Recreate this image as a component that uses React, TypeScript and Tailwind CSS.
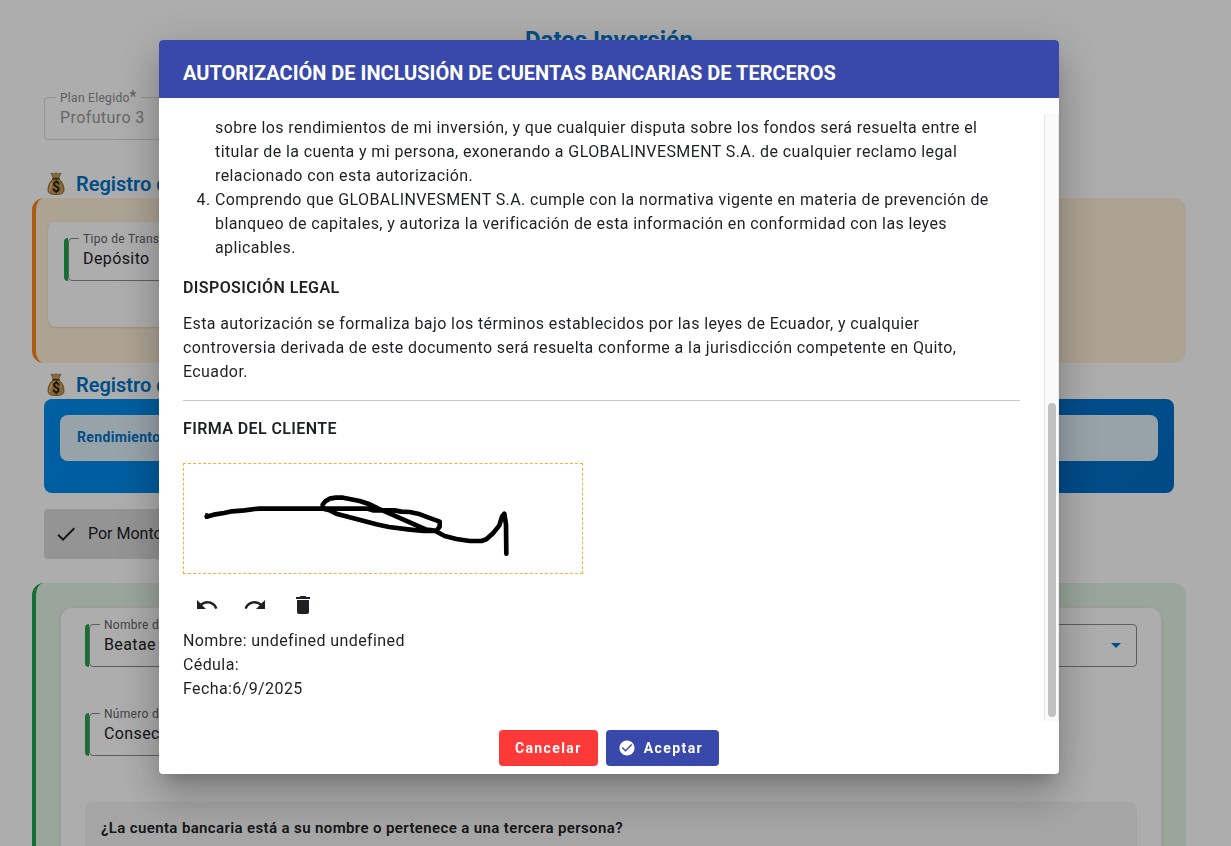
import { useId, type ReactNode } from "react";

function MoneyBag() {
  return (
    <svg viewBox="0 0 20 24" className="h-6 w-5 shrink-0" aria-hidden="true">
      <path d="M5 1 8 1.900 10 .8l2 1.100 3-.9-2.500 5.600H7.500z" fill="#c99f55" stroke="#6f4f20" strokeWidth=".6" />
      <path d="M7.500 6.600C4.500 9 2 13 2 17.600c0 3.600 2 4.800 8 4.800s8-1.200 8-4.800c0-4.600-2.500-8.600-5.500-11z" fill="#c69a50" stroke="#7f5a26" strokeWidth=".9" />
      <path d="M7 6.600h6" stroke="#5d3e19" strokeWidth="1.600" strokeLinecap="round" />
      <path d="M3.700 18.500c0-3 1-5.600 2.500-7.500" stroke="#efd08d" strokeWidth="1.200" fill="none" strokeLinecap="round" />
      <text x="10" y="19.500" textAnchor="middle" fontSize="14" fontWeight="700" fontFamily="Roboto, sans-serif" fill="#221a12">
        $
      </text>
    </svg>
  );
}

function SectionTitle({ children }: { children: ReactNode }) {
  return (
    <h2 className="flex items-center gap-2.5 pl-3.5 text-xl leading-7 font-semibold text-[#0073c8]">
      <MoneyBag />
      {children}
    </h2>
  );
}

function Field({ label, value }: { label: string; value: string }) {
  const id = useId();
  return (
    <div className="relative rounded-[4px] border-l-4 border-[#1fa34a]">
      <label htmlFor={id} className="absolute -top-[7px] left-[11px] bg-white px-1 text-xs leading-4 tracking-wide text-[#5f6368]">
        {label}
      </label>
      <input
        id={id}
        defaultValue={value}
        className="block h-[43px] w-full rounded-[4px] border border-[#8a8a8a] px-3.5 pb-0.5 text-base tracking-wide text-[#202124]"
      />
    </div>
  );
}

function InvestmentPage() {
  return (
    <main className="pt-6 pr-[45px] pl-8">
      <h1 className="text-center text-2xl leading-8 font-bold text-[#0073c8]">Datos Inversión</h1>

      <div className="relative mx-3 mt-[41px] w-1/2">
        <label htmlFor="plan" className="absolute -top-[7px] left-3 bg-white px-1 text-xs leading-4 tracking-wide text-[#8b8b8b]">
          Plan Elegido<span className="text-base leading-3">*</span>
        </label>
        <input
          id="plan"
          disabled
          defaultValue="Profuturo 3"
          className="block h-[43px] w-full rounded-[4px] border border-[#dadada] bg-white px-[15px] pb-0.5 text-base tracking-wide text-[#9a9a9a]"
        />
      </div>

      <div className="mt-[30px]">
        <SectionTitle>Registro de Pago</SectionTitle>
      </div>
      <section className="rounded-xl border-l-4 border-[#ff851b] bg-[#fef0d9] px-3 pt-6 pb-9">
        <div className="h-[105px] w-1/2 rounded-lg bg-white px-4 pt-4 shadow-sm">
          <Field label="Tipo de Transacción" value="Depósito" />
        </div>
      </section>

      <div className="mt-2">
        <SectionTitle>Registro de Plan</SectionTitle>
      </div>
      <section className="mx-3 rounded-lg bg-linear-135 from-[#008eef] to-[#006dc7] px-4 pt-4 pb-8">
        <div className="rounded-lg border border-white/30 bg-[#e0f0fa] px-4 pt-[11px] pb-[13px] text-sm leading-5 font-bold tracking-wide text-[#0073c8]">
          Rendimiento
        </div>
      </section>

      <button
        type="button"
        className="mx-3 mt-4 flex h-[50px] w-1/2 items-center gap-2.5 rounded-[4px] bg-[#dbdbdb] px-2.5 text-base text-[#202124]"
      >
        <svg viewBox="0 0 24 24" className="size-6 fill-current" aria-hidden="true">
          <path d="M9 16.200 4.800 12l-1.400 1.400L9 19 21 7l-1.400-1.400z" />
        </svg>
        Por Monto
      </button>

      <section className="mt-6 rounded-xl border-l-4 border-[#1fa34a] bg-[#e4f4e5] py-6 pr-6 pl-6">
        <div className="rounded-xl border border-[#e9e9e9] bg-white px-6 pt-4 pb-6 shadow-sm">
          <div className="grid grid-cols-2 gap-x-6 gap-y-[46px]">
            <Field label="Nombre del titular" value="Beatae" />
            <div className="relative">
              <select
                aria-label="Banco"
                className="h-[43px] w-full appearance-none rounded-[4px] border border-[#8a8a8a] bg-white px-4"
              />
              <svg viewBox="0 0 10 5" className="absolute top-[19px] right-4 h-[5px] w-2.5 fill-[#0073c8]" aria-hidden="true">
                <path d="M0 0h10L5 5z" />
              </svg>
            </div>
            <Field label="Número de cuenta" value="Consectetur" />
          </div>
          <div className="mt-[46px] h-24 rounded-lg bg-[#f3f3f3] px-4 py-3.5 text-[15px] leading-6 font-semibold tracking-wide text-[#202124]">
            ¿La cuenta bancaria está a su nombre o pertenece a una tercera persona?
          </div>
        </div>
      </section>
    </main>
  );
}

function Signature() {
  return (
    <div className="mt-[22px] h-[111px] w-[400px] max-w-full border border-dashed border-[#fbb034]">
      <svg viewBox="3 3 1194 327" className="block h-full w-full" role="img" aria-label="Firma">
        <g fill="none" stroke="#000" strokeWidth="14" strokeLinejoin="round" strokeLinecap="round">
          <path d="M71 161 97 154 123 150 147 145 184 142 215 138 230 137H555L570 142H634L655 146 680 147 705 152 735 163 770 176V191L761 203 722 204 675 199 618 192 580 184 540 173 500 163 460 152 440 142 421 137 419 125 427 115 440 107 458 104H480L500 108 530 114 560 124 586 137 626 154 680 178 730 200 755 203 785 219 820 228 860 234H895L910 229 930 211 949 187 957 161 964 152 969 185 970 272" />
        </g>
        <path d="M71 151v17M723 198v12" stroke="#000" strokeWidth="9" />
      </svg>
    </div>
  );
}

const tools = [
  {
    label: "Deshacer",
    path: "M12.5 8c-2.650 0-5.050.99-6.900 2.600L2 7v9h9l-3.620-3.620c1.390-1.160 3.160-1.880 5.120-1.880 3.540 0 6.550 2.310 7.600 5.500l2.370-.78C21.080 11.030 17.150 8 12.500 8z",
  },
  {
    label: "Rehacer",
    path: "M18.400 10.600C16.550 8.990 14.150 8 11.500 8c-4.650 0-8.580 3.030-9.960 7.220L3.900 16c1.050-3.190 4.050-5.500 7.600-5.500 1.950 0 3.730.72 5.120 1.880L13 16h9V7l-3.600 3.600z",
  },
  {
    label: "Borrar",
    path: "M6 19c0 1.100.9 2 2 2h8c1.100 0 2-.9 2-2V7H6v12zM19 4h-3.500l-1-1h-5l-1 1H5v2h14V4z",
  },
];

function AuthorizationDialog() {
  return (
    <div className="fixed inset-0 flex items-start justify-center bg-black/32 pt-10 pr-[13px]">
      <div
        role="dialog"
        aria-modal="true"
        aria-labelledby="dialog-title"
        className="w-full max-w-[900px] overflow-hidden rounded-[4px] bg-white text-[#1d2125] shadow-[0_11px_15px_-7px_rgba(0,0,0,0.2),0_24px_38px_3px_rgba(0,0,0,0.14),0_9px_46px_8px_rgba(0,0,0,0.12)]"
      >
        <h2 id="dialog-title" className="bg-[#3949ab] px-6 pt-[17px] pb-[9px] text-xl leading-8 font-bold text-white">
          AUTORIZACIÓN DE INCLUSIÓN DE CUENTAS BANCARIAS DE TERCEROS
        </h2>

        <div className="mt-4 flex">
          <div className="flex-1 pt-0.5 pr-6 pb-5 pl-6 text-base leading-6 tracking-wide">
            <ol start={3} className="list-decimal pl-8">
              <li className="list-none">
                sobre los rendimientos de mi inversión, y que cualquier disputa sobre los fondos será resuelta entre el
                titular de la cuenta y mi persona, exonerando a GLOBALINVESMENT S.A. de cualquier reclamo legal
                relacionado con esta autorización.
              </li>
              <li>
                Comprendo que GLOBALINVESMENT S.A. cumple con la normativa vigente en materia de prevención de blanqueo
                de capitales, y autoriza la verificación de esta información en conformidad con las leyes aplicables.
              </li>
            </ol>
            <h3 className="mt-4 font-semibold">DISPOSICIÓN LEGAL</h3>
            <p className="mt-3 max-w-[800px]">
              Esta autorización se formaliza bajo los términos establecidos por las leyes de Ecuador, y cualquier
              controversia derivada de este documento será resuelta conforme a la jurisdicción competente en Quito,
              Ecuador.
            </p>
            <hr className="mt-4 border-[#c6c6c6]" />
            <h3 className="mt-4 font-semibold">FIRMA DEL CLIENTE</h3>
            <Signature />
            <div className="mt-[7px] flex">
              {tools.map((tool) => (
                <button key={tool.label} type="button" aria-label={tool.label} className="flex size-12 items-center justify-center">
                  <svg viewBox="0 0 24 24" className="size-6 fill-current" aria-hidden="true">
                    <path d={tool.path} />
                  </svg>
                </button>
              ))}
            </div>
            <p>Nombre: undefined undefined</p>
            <p>Cédula:</p>
            <p>Fecha:6/9/2025</p>
          </div>
          <div className="flex w-[15px] flex-col justify-end border-x border-[#e8e8e8] bg-[#fafafa] px-[3px] pb-1" aria-hidden="true">
            <div className="h-[314px] w-2 rounded-full bg-[#c1c1c1]" />
          </div>
        </div>

        <div className="flex justify-center gap-2 pt-[9px] pb-2">
          <button type="button" className="h-9 rounded-[4px] bg-[#ff3838] px-4 text-sm font-bold tracking-widest text-white">
            Cancelar
          </button>
          <button
            type="button"
            className="flex h-9 items-center gap-2 rounded-[4px] bg-[#3949ab] pr-4 pl-3 text-sm font-bold tracking-widest text-white"
          >
            <svg viewBox="0 0 24 24" className="size-[18px] fill-current" aria-hidden="true">
              <path d="M12 2C6.480 2 2 6.480 2 12s4.480 10 10 10 10-4.480 10-10S17.520 2 12 2zm-2 15-5-5 1.410-1.410L10 14.170l7.590-7.590L19 8l-9 9z" />
            </svg>
            Aceptar
          </button>
        </div>
      </div>
    </div>
  );
}

export default function App() {
  return (
    <div className="h-screen overflow-hidden bg-white font-['Roboto',sans-serif]">
      <InvestmentPage />
      <AuthorizationDialog />
    </div>
  );
}
